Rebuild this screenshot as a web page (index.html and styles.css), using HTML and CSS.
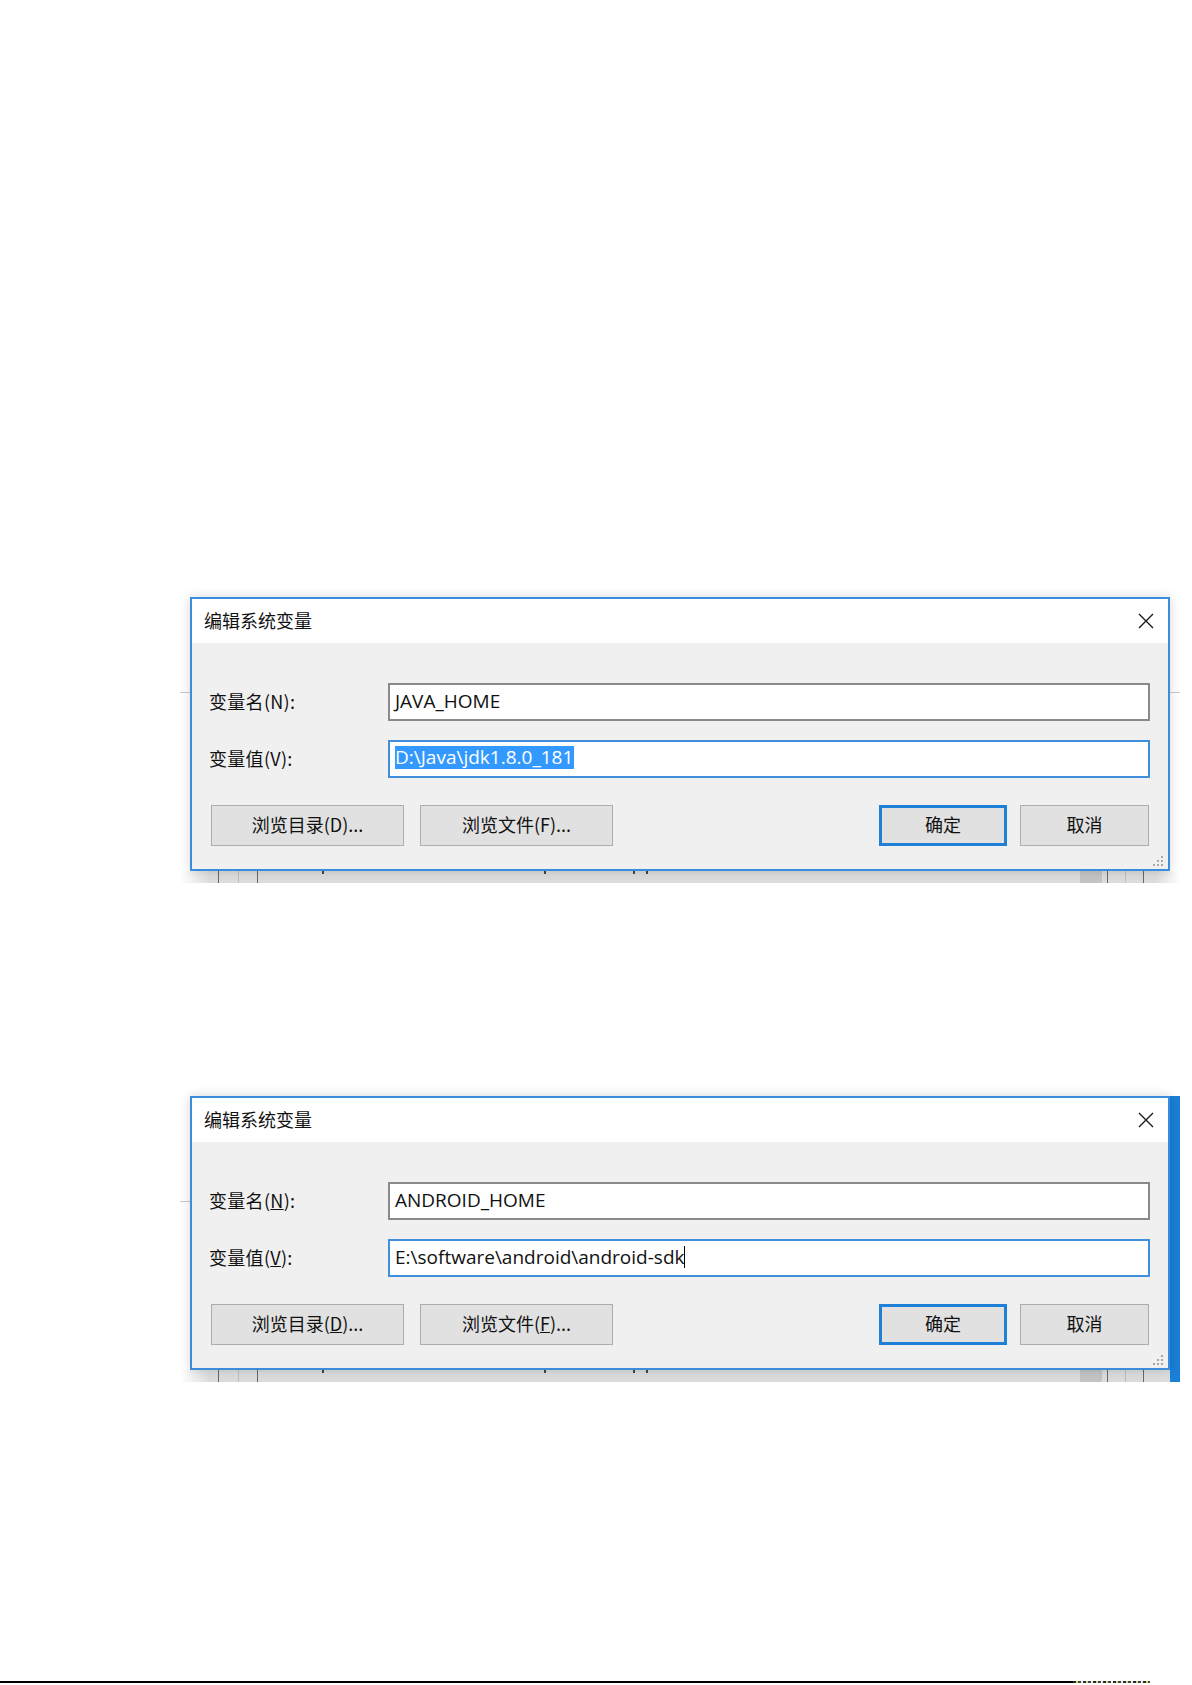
FILE: index.html
```html
<!DOCTYPE html>
<html lang="zh-CN">
<head>
<meta charset="utf-8">
<title>编辑系统变量</title>
<link rel="stylesheet" href="styles.css">
</head>
<body>
<main class="page">
  <section class="shot">
    <div class="edge edge-left"></div>
    <div class="dialog">
      <div class="titlebar">
        <span class="title">编辑系统变量</span>
        <svg class="close" width="16" height="16" viewBox="0 0 16 16"><path d="M1 1L15 15M15 1L1 15" stroke="#1a1a1a" stroke-width="1.4" fill="none"/></svg>
      </div>
      <div class="body">
        <div class="row"><span class="label">变量名(N):</span><div class="field">JAVA_HOME</div></div>
        <div class="row"><span class="label">变量值(V):</span><div class="field field-focus"><span class="sel">D:\Java\jdk1.8.0_181</span></div></div>
        <div class="buttons">
          <div class="btn btn-wide">浏览目录(D)...</div>
          <div class="btn btn-wide">浏览文件(F)...</div>
          <div class="btn btn-ok">确定</div>
          <div class="btn btn-cancel">取消</div>
        </div>
        <svg class="grip" width="12" height="12" viewBox="0 0 12 12"><g fill="#a8a8a8"><rect x="9" y="1" width="2" height="2"/><rect x="5" y="5" width="2" height="2"/><rect x="9" y="5" width="2" height="2"/><rect x="1" y="9" width="2" height="2"/><rect x="5" y="9" width="2" height="2"/><rect x="9" y="9" width="2" height="2"/></g></svg>
      </div>
    </div>
    <div class="edge edge-right"></div>
    <div class="backwin">
      <i class="vl vl-dark m38"></i><i class="vl vl-light m19"></i><i class="vl vl-dark m18"></i>
      <i class="dot m64"></i><i class="dot m220"></i><i class="dot m87"></i><i class="dot m11"></i>
      <span class="fill"></span>
      <i class="block"></i><i class="vl vl-dark m5"></i><i class="vl vl-light m17"></i><i class="vl vl-dark m17"></i><span class="tail"></span>
    </div>
  </section>

  <section class="shot shot-blue">
    <div class="edge edge-left edge-low"></div>
    <div class="dialog">
      <div class="titlebar">
        <span class="title">编辑系统变量</span>
        <svg class="close" width="16" height="16" viewBox="0 0 16 16"><path d="M1 1L15 15M15 1L1 15" stroke="#1a1a1a" stroke-width="1.4" fill="none"/></svg>
      </div>
      <div class="body">
        <div class="row"><span class="label">变量名(<u>N</u>):</span><div class="field">ANDROID_HOME</div></div>
        <div class="row"><span class="label">变量值(<u>V</u>):</span><div class="field field-focus">E:\software\android\android-sdk<span class="caret"></span></div></div>
        <div class="buttons">
          <div class="btn btn-wide">浏览目录(<u>D</u>)...</div>
          <div class="btn btn-wide">浏览文件(<u>F</u>)...</div>
          <div class="btn btn-ok">确定</div>
          <div class="btn btn-cancel">取消</div>
        </div>
        <svg class="grip" width="12" height="12" viewBox="0 0 12 12"><g fill="#a8a8a8"><rect x="9" y="1" width="2" height="2"/><rect x="5" y="5" width="2" height="2"/><rect x="9" y="5" width="2" height="2"/><rect x="1" y="9" width="2" height="2"/><rect x="5" y="9" width="2" height="2"/><rect x="9" y="9" width="2" height="2"/></g></svg>
      </div>
    </div>
    <div class="bluebar"></div>
    <div class="backwin">
      <i class="vl vl-dark m38"></i><i class="vl vl-light m19"></i><i class="vl vl-dark m18"></i>
      <i class="dot m64"></i><i class="dot m220"></i><i class="dot m87"></i><i class="dot m11"></i>
      <span class="fill"></span>
      <i class="block"></i><i class="vl vl-dark m5"></i><i class="vl vl-light m17"></i><i class="vl vl-dark m17"></i><span class="tail tail-short"></span>
    </div>
  </section>

  <div class="rule"><span class="rule-solid"></span><span class="rule-noise"></span></div>
</main>
</body>
</html>
```

FILE: styles.css
```css
* { box-sizing: border-box; }
html, body { margin: 0; padding: 0; background: #fff; }
body {
  width: 1192px;
  height: 1685px;
  overflow: hidden;
  font-family: "Open Sans", "Noto Sans CJK SC", sans-serif;
  color: #000;
}
.page {
  display: flex;
  flex-direction: column;
  padding-top: 597px;
}
.shot {
  display: grid;
  grid-template-columns: 10px 980px 10px;
  grid-template-rows: 274px 12px;
  width: 1000px;
  margin-left: 180px;
}
.shot + .shot { margin-top: 213px; }

.edge { grid-row: 1; align-self: start; height: 1px; background: #c9c9c9; margin-top: 95px; }
.edge-left { grid-column: 1; }
.edge-right { grid-column: 3; }
.edge-low { margin-top: 105px; }

.dialog {
  grid-column: 2;
  grid-row: 1;
  position: relative;
  z-index: 1;
  display: flex;
  flex-direction: column;
  border: 2px solid #3b8cdb;
  background: #f0f0f0;
  box-shadow: 0 0 10px rgba(0, 0, 0, 0.16);
}
.titlebar {
  height: 44px;
  flex: none;
  background: #fff;
  display: flex;
  align-items: center;
  justify-content: space-between;
  padding: 0 14px 2px 12px;
}
.title {
  font-family: "Noto Sans CJK SC", sans-serif;
  font-size: 18px;
  line-height: 20px;
  color: #111;
}
.close { display: block; margin-top: 2px; }

.body {
  flex: 1;
  position: relative;
  display: flex;
  flex-direction: column;
  padding: 40px 18px 23px 17px;
}
.row {
  display: flex;
  align-items: center;
  height: 38px;
}
.row + .row { margin-top: 19px; }
.label {
  width: 179px;
  flex: none;
  font-family: "Noto Sans CJK SC", sans-serif;
  font-size: 18px;
  line-height: 20px;
  letter-spacing: 0.3px;
  color: #111;
  padding-bottom: 3px;
}
.field {
  flex: 1;
  height: 38px;
  display: flex;
  align-items: center;
  padding: 0 0 3px 5px;
  background: #fff;
  border: 2px solid #8a8a8a;
  font-size: 19px;
  white-space: pre;
  color: #111;
}
.field-focus { border-color: #3f8fdc; }
.sel {
  background: #3399ff;
  color: #fff;
  line-height: 23px;
  padding-right: 1px;
}
.caret {
  display: inline-block;
  width: 1px;
  height: 22px;
  background: #000;
  margin-left: -1px;
}

.buttons {
  display: flex;
  height: 41px;
  margin-top: 27px;
  padding-left: 2px;
  margin-right: 1px;
}
.btn {
  height: 41px;
  display: flex;
  align-items: center;
  justify-content: center;
  padding-bottom: 3px;
  border: 1px solid #adadad;
  background: #e1e1e1;
  font-family: "Noto Sans CJK SC", sans-serif;
  font-size: 18px;
  color: #111;
}
.btn-wide { width: 193px; }
.btn-wide + .btn-wide { margin-left: 16px; }
.btn-ok {
  width: 128px;
  margin-left: auto;
  border: 3px solid #1f80d8;
}
.btn-cancel { width: 129px; margin-left: 13px; }
.grip { position: absolute; right: 4px; bottom: 2px; }

.bluebar { grid-column: 3; grid-row: 1 / 3; background: #1a7fd6; }

.backwin {
  grid-column: 1 / 4;
  grid-row: 2;
  display: flex;
  align-items: stretch;
  background: linear-gradient(to right, rgba(220,220,220,0) 0, #dcdcdc 30px, #dcdcdc calc(100% - 25px), rgba(220,220,220,0) 100%);
}
.shot-blue .backwin { grid-column: 1 / 3; background: linear-gradient(to right, rgba(220,220,220,0) 0, #dcdcdc 30px, #dcdcdc 100%); }
.vl { display: block; width: 1px; flex: none; }
.vl-dark { background: #666; }
.vl-light { background: #bdbdbd; }
.dot { display: block; width: 2px; height: 3px; background: #444; flex: none; }
.m38 { margin-left: 38px; }
.m19 { margin-left: 19px; }
.m18 { margin-left: 18px; }
.m64 { margin-left: 64px; }
.m220 { margin-left: 220px; }
.m87 { margin-left: 87px; }
.m11 { margin-left: 11px; }
.m5 { margin-left: 5px; }
.m17 { margin-left: 17px; }
.fill { flex: 1; }
.block { display: block; width: 22px; background: #c4c4c4; flex: none; }
.tail { width: 36px; flex: none; }
.tail-short { width: 26px; }

.rule {
  display: flex;
  height: 2px;
  margin-top: 299px;
}
.rule-solid { width: 1073px; background: #000; }
.rule-noise {
  width: 77px;
  background: repeating-linear-gradient(to right, #2a2a2a 0 3px, #d9d38a 3px 5px, #444 5px 8px, #f2f2f2 8px 10px);
}
```
